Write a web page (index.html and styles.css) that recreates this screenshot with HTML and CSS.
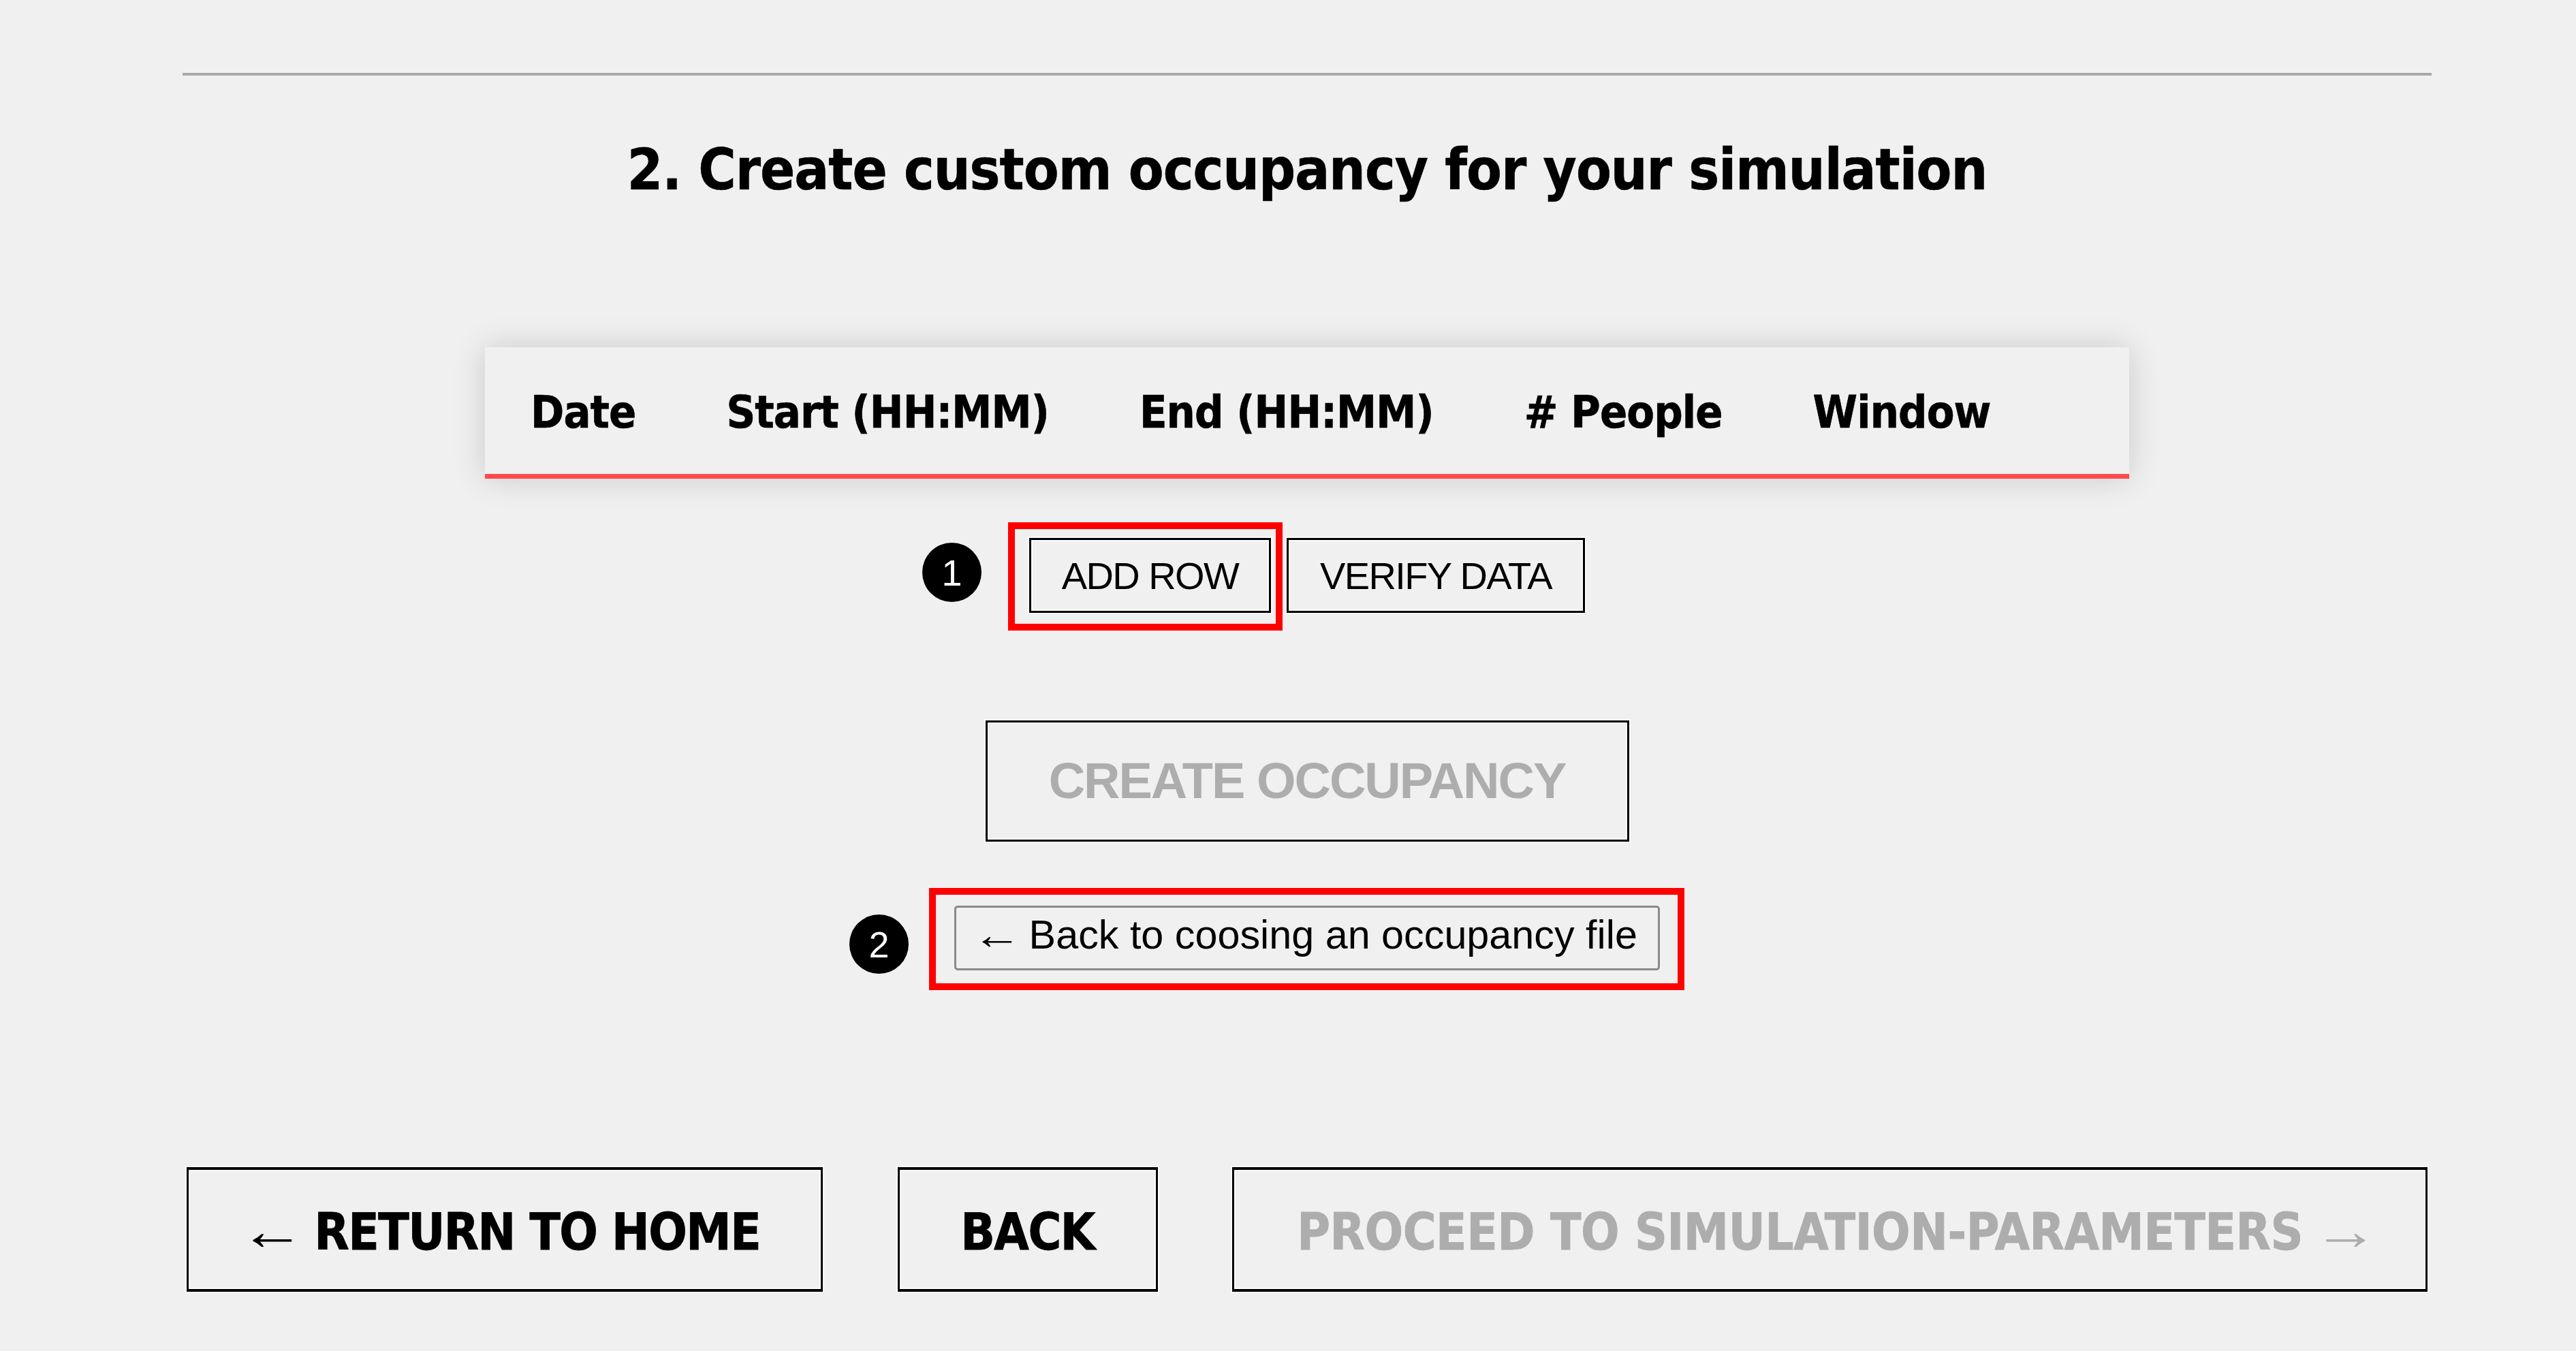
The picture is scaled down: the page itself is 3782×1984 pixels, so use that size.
FILE: index.html
```html
<!DOCTYPE html>
<html lang="en">
<head>
<meta charset="utf-8">
<title>Create custom occupancy</title>
<link rel="stylesheet" href="styles.css">
</head>
<body>
<main class="page">
  <hr class="rule">
  <h2 class="title">2. Create custom occupancy for your simulation</h2>
  <div class="table-head">
    <span>Date</span>
    <span>Start (HH:MM)</span>
    <span>End (HH:MM)</span>
    <span># People</span>
    <span>Window</span>
  </div>
  <div class="row-actions">
    <button class="btn small">ADD ROW</button>
    <button class="btn small">VERIFY DATA</button>
    <span class="marker marker-one">1</span>
    <span class="callout callout-one"></span>
  </div>
  <button class="btn create">CREATE OCCUPANCY</button>
  <div class="back-wrap">
    <button class="back-link"><span class="arrow">←</span> Back to coosing an occupancy file</button>
    <span class="marker marker-two">2</span>
    <span class="callout callout-two"></span>
  </div>
  <nav class="footer-nav">
    <button class="btn nav nav-home"><span class="arrow">←</span> RETURN TO HOME</button>
    <button class="btn nav nav-back">BACK</button>
    <button class="btn nav nav-next">PROCEED TO SIMULATION-PARAMETERS <span class="arrow">→</span></button>
  </nav>
</main>
</body>
</html>
```
FILE: styles.css
```css
* { box-sizing: border-box; }
html, body { margin: 0; height: 100%; }
body { background: #f0f0f0; color: #000; font-family: "Liberation Sans", Arial, sans-serif; overflow: hidden; }
.page { height: 1984px; padding: 107px 212px 0 268px; display: flex; flex-direction: column; align-items: center; }
.rule { width: 100%; height: 4px; margin: 0; border: 0; background: #a8a8a8; }
.title { margin: 95px 0 0; height: 86px; line-height: 86px; font-family: "DejaVu Sans", sans-serif; font-stretch: condensed; font-weight: 700; font-size: 84px; letter-spacing: -1px; white-space: nowrap; -webkit-text-stroke: .6px #000; }
.table-head { width: 2414px; height: 193px; margin-top: 218px; padding: 4px 0 0 67px; display: flex; gap: 133px; align-items: center; border-bottom: 7px solid #ff4a4f; box-shadow: 0 0 45px rgba(0,0,0,.16); font-family: "DejaVu Sans", sans-serif; font-stretch: condensed; font-weight: 700; font-size: 66px; letter-spacing: -.9px; background: #f0f0f0; white-space: nowrap; -webkit-text-stroke: .6px #000; }
.btn { background: #f0f0f0; border: 3px solid #000; color: #000; font-family: "Liberation Sans", Arial, sans-serif; padding: 0; box-shadow: 0 0 0 2px rgba(255,255,255,.7), inset 0 0 0 2px rgba(255,255,255,.7); white-space: nowrap; }
.row-actions { position: relative; display: flex; gap: 23px; margin-top: 87px; }
.small { height: 110px; font-size: 56px; letter-spacing: -1.6px; }
.small:first-child { width: 355px; }
.small:nth-child(2) { width: 438px; }
.marker { position: absolute; width: 87px; height: 87px; border-radius: 50%; background: #000; color: #fff; font-size: 54px; display: flex; align-items: center; justify-content: center; }
.marker-one { left: -157px; top: 7px; }
.marker-two { left: -154px; top: 13px; }
.callout { position: absolute; border: 10px solid #f00; pointer-events: none; }
.callout-one { left: -31px; top: -23px; width: 403px; height: 159px; }
.callout-two { left: -37px; top: -26px; width: 1109px; height: 150px; }
.create { width: 945px; height: 178px; margin-top: 158px; font-size: 74px; letter-spacing: -2px; font-weight: 700; color: #adadad; padding-bottom: 2px; }
.back-wrap { position: relative; margin-top: 94px; }
.back-link { display: block; width: 1036px; height: 95px; background: #f0f0f0; border: 3px solid #8a8a8a; border-radius: 5px; padding: 0 0 10px; font-family: "Liberation Sans", Arial, sans-serif; font-size: 59.3px; color: #000; white-space: nowrap; }
.footer-nav { width: 100%; display: flex; padding: 0 6px; margin-top: 289px; justify-content: space-between; }
.nav { height: 183px; padding-top: 7px; border-width: 4px 3px; font-family: "DejaVu Sans", sans-serif; font-stretch: condensed; font-weight: 700; font-size: 74px; letter-spacing: -1.5px; -webkit-text-stroke: .8px currentColor; }
.nav-home { width: 934px; padding-right: 6px; }
.nav-back { width: 382px; }
.nav-next { width: 1755px; padding-left: 15px; color: #adadad; letter-spacing: -.4px; }
.arrow { display: inline-block; font-family: "Liberation Sans", Arial, sans-serif; font-weight: 400; font-size: 80px; letter-spacing: 0; line-height: 0; -webkit-text-stroke: 0; transform: scaleX(1.2); }
.back-link .arrow { font-size: 60px; }
```
